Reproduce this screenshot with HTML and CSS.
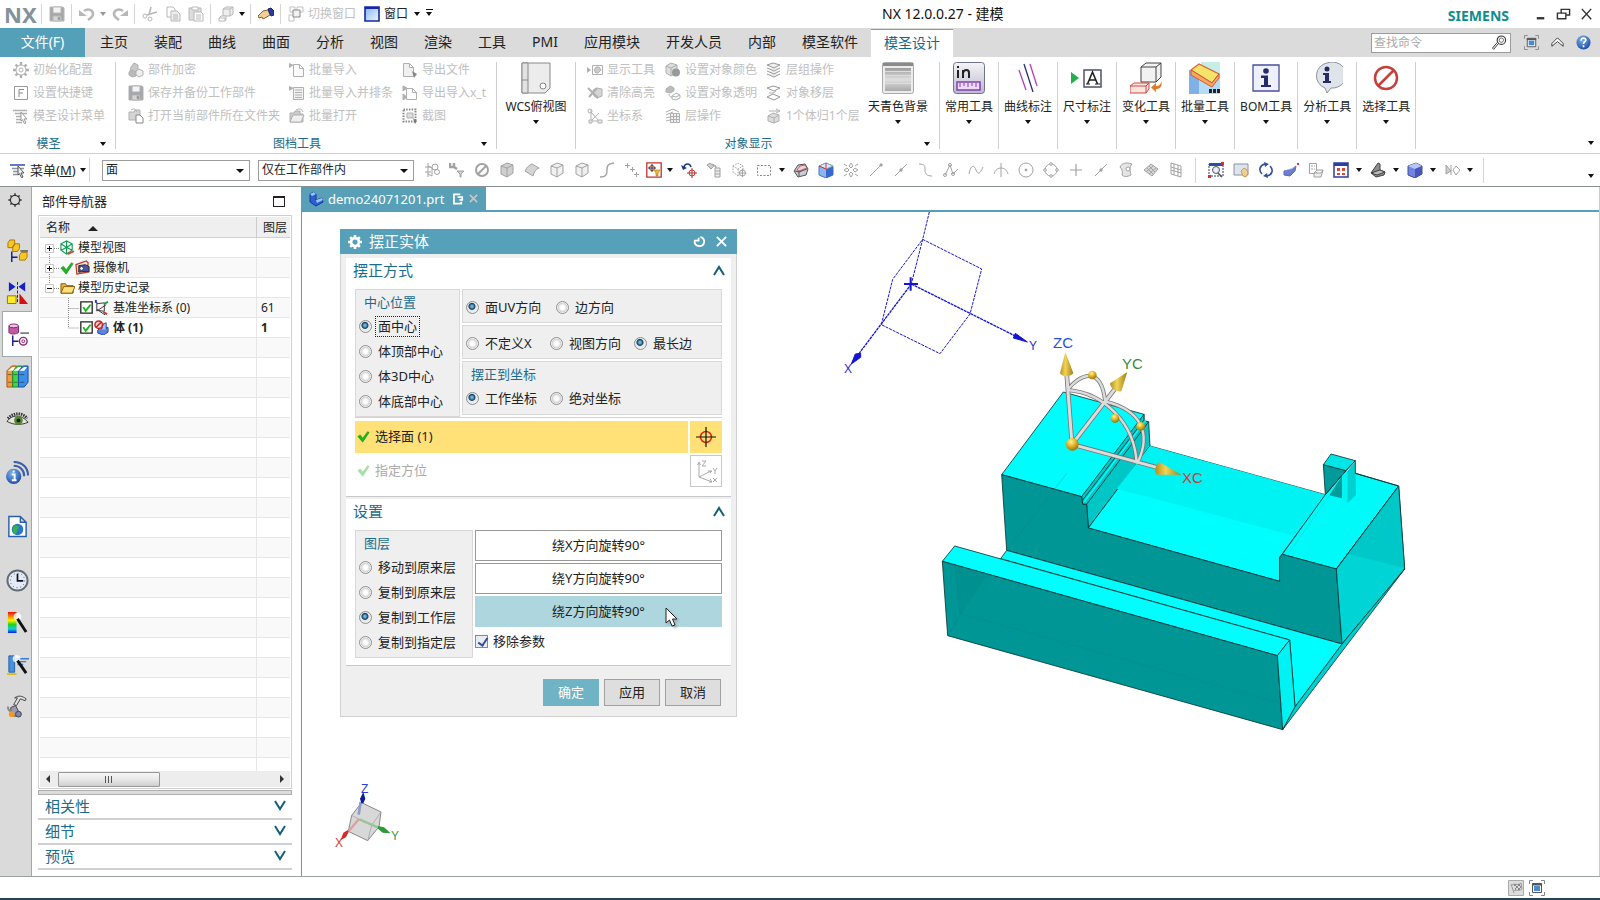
FILE: index.html
```html
<!DOCTYPE html>
<html lang="zh-CN">
<head>
<meta charset="utf-8">
<title>NX 12.0.0.27 - 建模</title>
<link rel="stylesheet" href="styles.css">
</head>
<body>
<svg class="sprite" width="0" height="0" aria-hidden="true">
  <defs>
    <linearGradient id="g-sky" x1="0" y1="0" x2="1" y2="1"><stop offset="0" stop-color="#7fb2f0"/><stop offset="1" stop-color="#f4f9ff"/></linearGradient>
    <linearGradient id="g-grey" x1="0" y1="0" x2="0" y2="1"><stop offset="0" stop-color="#9c9c9c"/><stop offset=".5" stop-color="#e0e0e0"/><stop offset="1" stop-color="#a8a8a8"/></linearGradient>
    <linearGradient id="g-metal" x1="0" y1="0" x2="0" y2="1"><stop offset="0" stop-color="#f4f4f8"/><stop offset="1" stop-color="#b9bccf"/></linearGradient>
    <linearGradient id="g-rain" x1="0" y1="0" x2="0" y2="1"><stop offset="0" stop-color="#e01010"/><stop offset=".25" stop-color="#ff9a00"/><stop offset=".4" stop-color="#f6f600"/><stop offset=".6" stop-color="#20d020"/><stop offset=".8" stop-color="#10d0e0"/><stop offset="1" stop-color="#1020d0"/></linearGradient>
    <linearGradient id="g-cone" x1="0" y1="0" x2="1" y2="0"><stop offset="0" stop-color="#b58f1c"/><stop offset=".4" stop-color="#f1d457"/><stop offset="1" stop-color="#a17d12"/></linearGradient>
    <radialGradient id="g-ball" cx=".4" cy=".3" r=".7"><stop offset="0" stop-color="#fff0a0"/><stop offset=".45" stop-color="#e6bd2e"/><stop offset="1" stop-color="#9c7406"/></radialGradient>
    <radialGradient id="g-blue" cx=".4" cy=".3" r=".8"><stop offset="0" stop-color="#7db4ee"/><stop offset="1" stop-color="#123f9c"/></radialGradient>
  </defs>
  <symbol id="save" viewBox="0 0 16 16"><path d="M1 1h13l1 1v13H1z" fill="#a4a6a8"/><path d="M4 1h8v6H4z" fill="#f3f3f3"/><path d="M4 10h8v5H4z" fill="#d6d6d6"/><path d="M9 11h2v3H9z" fill="#777"/></symbol>
  <symbol id="undo" viewBox="0 0 16 16"><path d="M5 5c4-3 9-1 9 3 0 2-2 4-5 6" stroke-width="2.600"/><path d="M0 4v6h8z" fill="currentColor" stroke="none"/></symbol>
  <symbol id="redo" viewBox="0 0 16 16"><path d="M11 5C7 2 2 4 2 8c0 2 2 4 5 6" stroke-width="2.600"/><path d="M16 4v6H8z" fill="currentColor" stroke="none"/></symbol>
  <symbol id="cut" viewBox="0 0 16 16"><path d="M9 1 7 9M15 6 5 9" stroke-width="1.6"/><circle cx="3" cy="10" r="2"/><circle cx="8" cy="13" r="2"/></symbol>
  <symbol id="copy" viewBox="0 0 16 16"><path d="M2 1h6l2 2v8H2z" fill="#fff"/><path d="M6 5h6l3 3v7H6z" fill="#eee"/><path d="M8 9h5M8 11h5M8 13h5"/></symbol>
  <symbol id="paste" viewBox="0 0 16 16"><path d="M1 2h12v12H1z" fill="#ddd"/><path d="M4 1h6v3H4z" fill="#fff"/><path d="M6 6h7l2 2v7H6z" fill="#fff"/><path d="M8 9h5M8 11h5M8 13h5"/></symbol>
  <symbol id="boxes" viewBox="0 0 16 16"><path d="m5 3 3-2h7v7l-3 2H5zM5 3h7v7M12 3l3-2" fill="#eee"/><path d="m1 12 2-2h5v4l-1 1H1zM1 12h6v3" fill="#fff"/></symbol>
  <symbol id="hand" viewBox="0 0 16 16"><path d="m0 10 5-5 5-1 2 5-5 3-2 1-1-2-3 1z" fill="#f0d098" stroke="#8a6030"/><path d="m10 3 3-1 3 3v4l-3 1z" fill="#2639a8" stroke="#1a2576"/></symbol>
  <symbol id="winswap" viewBox="0 0 16 16"><path d="M2 1h5v5H2zM9 1h6v5H9zM1 9h5v6H1z"/><path d="M5 4h7v7H5z" fill="#f2f2f2" stroke="#888"/></symbol>
  <symbol id="win" viewBox="0 0 16 16"><path d="M1 1h14v14H1z" fill="url(#g-sky)" stroke="#1527a5" stroke-width="1.6"/><path d="M1 2h14" stroke="#1527a5" stroke-width="2"/></symbol>
  <symbol id="gear" viewBox="0 0 16 16"><circle cx="8" cy="8" r="5"/><circle cx="8" cy="8" r="2"/><path d="M8 0v3M8 13v3M0 8h3M13 8h3M2.500 2.500l2 2M11.500 11.500l2 2M13.500 2.500l-2 2M4.500 11.500l-2 2" stroke-width="2.400"/></symbol>
  <symbol id="gearbold" viewBox="0 0 16 16"><circle cx="8" cy="8" r="4.500" stroke-width="3"/><path d="M8 0v3M8 13v3M0 8h3M13 8h3M2.500 2.500l2 2M11.500 11.500l2 2M13.500 2.500l-2 2M4.500 11.500l-2 2" stroke-width="3"/></symbol>
  <symbol id="key" viewBox="0 0 16 16"><path d="M1.500 1.500h13v13h-13z" stroke="#9a9a9a"/><path d="M6 12V4.500h5M6 8h4" stroke="#8a8a8a"/></symbol>
  <symbol id="menu" viewBox="0 0 16 16"><path d="M0 2.500h14M2 5.500h12M3 8.500h5M3 11.500h5M3 14.500h6" stroke-width="1.6"/><path d="m8 4 6 7-3 0 2 4-1.500.7-2-4L8 13z" fill="#fff" stroke="#999"/></symbol>
  <symbol id="menub" viewBox="0 0 16 16"><path d="M0 2h15v2H0z" fill="#6679c8" stroke="none"/><path d="M2 6.500h12M3 9.500h5M3 12.500h5" stroke="#8a93a8" stroke-width="1.500"/><path d="m8 4 6 7-3 0 2 4-1.500.7-2-4L8 13z" fill="#eee" stroke="#555"/></symbol>
  <symbol id="cubes" viewBox="0 0 16 16"><path d="m3 5 3-4 4 2v5l-5 3-3-2z" fill="#c8c8c8"/><path d="m1 10 3-2 4 2v4l-4 1-3-2z" fill="#b9b9b9"/><path d="m8 9 3-2 4 2v4l-4 2-3-2z" fill="#eee"/></symbol>
  <symbol id="doc" viewBox="0 0 16 16"><path d="M4.500 2.500h6l4 4v8h-10zM10.500 2.500v4h4" fill="#fafafa"/><path d="M0 1l5 2-5 3z" fill="currentColor" stroke="none"/></symbol>
  <symbol id="doclist" viewBox="0 0 16 16"><path d="M4.500 2.500h10v12h-10z" fill="#f2f2f2"/><path d="M6 5h7M6 7.500h7M6 10h7M6 12.500h7" /><path d="M0 1l5 2-5 3z" fill="currentColor" stroke="none"/></symbol>
  <symbol id="docout" viewBox="0 0 16 16"><path d="M1.500 1.500h6l4 4v9h-10zM7.500 1.500v4h4" fill="#f0f0f0"/><path d="M10 9l5 3-3 4z" fill="#888" stroke="none"/></symbol>
  <symbol id="docio" viewBox="0 0 16 16"><path d="M4.500 3.500h6l4 4v7h-10zM10.500 3.500v4h4" fill="#fff"/><path d="M1 1l4 2-4 3zM1 9l4 3-4 3z" fill="currentColor"/></symbol>
  <symbol id="folderdoc" viewBox="0 0 16 16"><path d="M1 4h5l1-2h5v10H1z" fill="#d4d4d4"/><path d="M8 7h4l3 3v5H8z" fill="#fff" stroke="#888"/><path d="M3 2c3-2 5-1 6 2"/></symbol>
  <symbol id="folder" viewBox="0 0 16 16"><path d="M1 14V5h4l1-2h5v3h3v8z" fill="#ccc"/><path d="m1 14 3-7h11l-3 7z" fill="#efefef"/><path d="M7 2c3-2 6-1 7 2"/></symbol>
  <symbol id="snap" viewBox="0 0 16 16"><path d="M1.500 1.500h12v12h-12z" stroke-width="2" stroke-dasharray="1.500 1.200" stroke="#888"/><path d="M5 5h6v5H5z" fill="#ddd"/><path d="m11 10 4 3-2 3z" fill="#777" stroke="none"/></symbol>
  <symbol id="show" viewBox="0 0 16 16"><path d="M0 5l4 3-4 3z" fill="currentColor" stroke="none"/><path d="M5.500 3.500h10v9h-10z"/><path d="m7 8 2-3h3l2 3-3 3H9z" fill="#ccc"/></symbol>
  <symbol id="clear" viewBox="0 0 16 16"><path d="m6 5 4-2 5 1v7l-5 2-3-2z" fill="#d4d4d4"/><path d="m1 3 10 10M10 3 2 12" stroke-width="2"/></symbol>
  <symbol id="csys" viewBox="0 0 16 16"><path d="M4 2v11h9M4 13l8-8M4 4l8 9"/><circle cx="3" cy="3" r="2"/><path d="M2 12h3v3H2zM11 12h4v3h-4z" fill="#eee"/></symbol>
  <symbol id="objcolor" viewBox="0 0 16 16"><path d="m1 4 5-3 6 2v8l-6 3-5-3zM1 4l5 2v8M6 6l6-3" fill="#ddd"/><circle cx="11" cy="10.500" r="4" fill="#999" stroke="none"/></symbol>
  <symbol id="objtrans" viewBox="0 0 16 16"><path d="m1 4 4-3 4 2v3L5 8 1 7z" fill="#bbb"/><path d="m7 11 4-3 4 2v3l-4 2-4-1zM7 11l4 1 4-2"/><path d="M4 9c0 2 1 3 3 3"/></symbol>
  <symbol id="layers" viewBox="0 0 16 16"><path d="m1 3 6-2 7 2-6 3zM1 6l7 3 6-3M1 9l7 3 6-3M1 12l7 3 6-3" fill="#eee" stroke="#999"/></symbol>
  <symbol id="layerset" viewBox="0 0 16 16"><path d="m1 4 7-3 6 3M1 7l7-3M1 10l4-1M1 13l4-1"/><path d="M5.500 5.500h9v9h-9zM5.500 8.500h9M5.500 11.500h9M8.500 5.500v9M11.500 5.500v9" fill="#f0f0f0"/></symbol>
  <symbol id="layermove" viewBox="0 0 16 16"><path d="m1 3 6-2 7 2-6 3zM1 12l6-3 7 3-6 3z" stroke="#999"/><path d="M3 8h4l3-2"/></symbol>
  <symbol id="onebody" viewBox="0 0 16 16"><path d="m2 8 5-3 6 2v6l-5 2-6-2zM2 8l6 2v5M8 10l5-3" fill="#ddd"/><path d="M3 3h9M10 1l4 2-4 2"/></symbol>
  <symbol id="cube" viewBox="0 0 16 16"><path d="m2 4 6-3 6 2v8l-6 4-6-3z" fill="#f0f0f0"/><path d="m2 4 6 2 6-3M8 6v9"/></symbol>
  <symbol id="cubedark" viewBox="0 0 16 16"><path d="m2 4 6-3 6 2v8l-6 4-6-3z" fill="#cfcfcf"/><path d="m2 4 6 2 6-3M8 6v9"/></symbol>
  <symbol id="sheet" viewBox="0 0 16 16"><path d="M1 9c2-4 4-6 7-7l7 4c-3 1-5 4-6 8z" fill="#d4d4d4"/></symbol>
  <symbol id="curve" viewBox="0 0 16 16"><path d="M1 15c6 0 7-2 7-7s1-6 7-7" stroke-width="1.400"/></symbol>
  <symbol id="filter1" viewBox="0 0 16 16"><path d="M4 1v14M4 4l4 2v8l-4-2M1 5h6M1 10h6"/><circle cx="11" cy="5" r="3"/><circle cx="13" cy="10" r="2.500"/></symbol>
  <symbol id="filter2" viewBox="0 0 16 16"><path d="M1 1v4h4V1M5 5l3 2" stroke-width="2.500"/><path d="M8 9h7l-3 3v3h-1v-3z" fill="#ccc"/></symbol>
  <symbol id="ban" viewBox="0 0 16 16"><circle cx="8" cy="8" r="6" stroke-width="2"/><path d="M12 4l-8 8" stroke-width="2"/></symbol>
  <symbol id="pluses" viewBox="0 0 16 16"><path d="M3.500 1v5M1 3.500h5M8.500 5v5M6 7.500h5M12.500 10v5M10 12.500h5"/></symbol>
  <symbol id="redsel" viewBox="0 0 16 16"><path d="M.8.800h14.400v14.400H.8z" stroke="#c23030" stroke-width="1.300"/><circle cx="6" cy="6" r="2.500" stroke="#933"/><path d="M6 2v8M2 6h8" stroke="#333"/><path d="M8 8h6l-2 3v3h-2v-3z" fill="#f2b53a" stroke="#a87410" stroke-width=".6"/></symbol>
  <symbol id="undotarget" viewBox="0 0 16 16"><path d="M3 5c1-4 6-4 7 0" stroke="#223a7a" stroke-width="1.600"/><path d="M0 3l2 5 4-2z" fill="#223a7a" stroke="none"/><circle cx="11" cy="11" r="3" stroke="#c33"/><path d="M11 6v10M6 11h10" stroke="#a33"/></symbol>
  <symbol id="chain" viewBox="0 0 16 16"><path d="m1 3 3-2 4 3-3 3zM6 2l4 2v3" fill="#ccc"/><path d="M9 6h5v9H9zM9 9h5M9 12h5" fill="#eee"/></symbol>
  <symbol id="cubetarget" viewBox="0 0 16 16"><path d="m2 4 5-3 5 3v6l-5 4-5-4zM2 4l5 3 5-3M7 7v7" stroke-dasharray="1.500 1.200"/><circle cx="11.500" cy="11" r="3" fill="#fff"/><path d="M11.500 7v8M7.500 11h8"/></symbol>
  <symbol id="marquee" viewBox="0 0 16 16"><path d="M1.500 3.500h13v10h-13z" stroke-dasharray="2 1.500" stroke="#888"/></symbol>
  <symbol id="shade" viewBox="0 0 16 16"><path d="m1 9 4-6 7-1 3 5-2 6-8 2z" fill="#c8ccd6" stroke="#555"/><path d="m4 8 3-4 5-1 2 3-8 3z" fill="#ecd2d4" stroke="#a33" stroke-width=".7"/><path d="M6 9v5M2 9l4 1 8-3" stroke="#555"/></symbol>
  <symbol id="bluecube" viewBox="0 0 16 16"><path d="m1 4 7-3 7 3v9l-7 3-7-3z" fill="#8ab6f2" stroke="#5573b8"/><path d="m8 7 7-3v9l-7 3z" fill="#3569cc" stroke="none"/><path d="m1 4 7 3 7-3-7-3z" fill="#d9eafc" stroke="#8aa"/><path d="M8 1v6l-7-3" stroke="#d33"/></symbol>
  <symbol id="dirs" viewBox="0 0 16 16"><path d="m8 1 2 3-2 2-2-2zM8 10l2 2-2 3-2-3zM1 8l3-2 2 2-2 2zM10 8l2-2 3 2-3 2zM1 2l3 2M1 14l3-2M15 2l-3 2M15 14l-3-2"/></symbol>
  <symbol id="line1" viewBox="0 0 16 16"><path d="M2 14 13 3"/><path d="M12 2h2v2h-2z" fill="currentColor"/></symbol>
  <symbol id="line2" viewBox="0 0 16 16"><path d="M2 14 14 2"/><circle cx="8" cy="8" r="1.200" fill="currentColor"/></symbol>
  <symbol id="arc1" viewBox="0 0 16 16"><path d="M1 2c6 0 6 2 6 6s2 6 7 6"/></symbol>
  <symbol id="poly" viewBox="0 0 16 16"><path d="M2 13 7 3l3 9 5-5"/><circle cx="2" cy="13" r="1.500"/><circle cx="7" cy="3" r="1.500"/><circle cx="10" cy="12" r="1.500"/></symbol>
  <symbol id="spline" viewBox="0 0 16 16"><path d="M1 12C3 2 6 3 8 8s4 4 7-3"/></symbol>
  <symbol id="tangent" viewBox="0 0 16 16"><path d="M1 12c2-8 12-8 14 0M8 1v14"/></symbol>
  <symbol id="circ" viewBox="0 0 16 16"><circle cx="8" cy="8" r="7"/><circle cx="8" cy="8" r="1" fill="currentColor"/></symbol>
  <symbol id="circ4" viewBox="0 0 16 16"><circle cx="8" cy="8" r="6"/><g fill="#fff"><circle cx="8" cy="2" r="1.300"/><circle cx="8" cy="14" r="1.300"/><circle cx="2" cy="8" r="1.300"/><circle cx="14" cy="8" r="1.300"/></g></symbol>
  <symbol id="plus" viewBox="0 0 16 16"><path d="M8 2v12M2 8h12" stroke-width="1.200"/></symbol>
  <symbol id="flag" viewBox="0 0 16 16"><path d="M2 5c2-4 6-5 12-3-3 3-2 7-1 11-4 2-7 2-9 0 1-3 0-6-2-8z" fill="#e4e4e4"/><circle cx="10" cy="7" r="2" fill="#fff"/></symbol>
  <symbol id="mesh" viewBox="0 0 16 16"><path d="m1 8 7-6 7 5-6 7z" fill="#d8d8d8"/><path d="m4 6 6 6M6 4l6 6M3 10l7-6M6 12l7-6"/></symbol>
  <symbol id="grid" viewBox="0 0 16 16"><path d="m3 1 10 3v11L3 12zM6 2v11M10 3v11M3 5l10 3M3 8l10 3"/></symbol>
  <symbol id="fit" viewBox="0 0 16 16"><path d="M1 2h14v12H1z" stroke="#2b3f8c" stroke-dasharray="2 1"/><path d="M1 2.500h14" stroke="#2d4aa8" stroke-width="3"/><circle cx="8" cy="8" r="3.500" fill="#e6eef8" stroke="#555"/><path d="m10 11 4 4" stroke="#555" stroke-width="1.600"/><path d="M0 13h3v3H0zM13 0h3v3h-3z" fill="#c33" stroke="none"/></symbol>
  <symbol id="pan" viewBox="0 0 16 16"><path d="M1 2h14v11H1z" fill="#dde4ec" stroke="#8892a0"/><path d="m8 9 3-3 3 2 1 3-2 4-3-1z" fill="#efcf8f" stroke="#c0a060"/></symbol>
  <symbol id="rotate" viewBox="0 0 16 16"><path d="M4 12C0 8 2 3 7 2M12 4c4 4 2 9-3 10" stroke="#34509c" stroke-width="1.600"/><path d="M6 0l5 2-4 3zM10 16l-5-2 4-3z" fill="#34509c" stroke="none"/></symbol>
  <symbol id="persp" viewBox="0 0 16 16"><path d="m1 9 8-2 4-3-1 5-5 5-6-1z" fill="#6d7fd0" stroke="#5a68b8"/><path d="m1 9 8-2 4-3-7 3z" fill="#c6cef2" stroke="none"/><path d="M14 1h2v2h-2z" fill="#d33" stroke="none"/></symbol>
  <symbol id="orient" viewBox="0 0 16 16"><path d="M1.500 1.500h7v10h-7zM3 4h2M6 4h1M3 7h2M6 7h1"/><path d="m6 11 3-3h6l-2 7H6zM6 11h7l2-3" fill="#eee"/></symbol>
  <symbol id="views" viewBox="0 0 16 16"><path d="M1 1h14v14H1z" fill="#fff" stroke="#2b3fa0" stroke-width="1.500"/><path d="M1 2.500h14" stroke="#2b3fa0" stroke-width="3"/><path d="M4 6h3v3H4zM9 6h3v3H9zM4 11h3v2H4zM9 11h3v2H9z" fill="#d64a3a" stroke="none"/></symbol>
  <symbol id="wedge" viewBox="0 0 16 16"><path d="M1 11 8 1l2 1v6l5 2-1 3-8 2z" fill="#8c8c8c" stroke="#444"/><path d="m1 11 9-3 5 2-8 3z" fill="#bbb" stroke="#444"/></symbol>
  <symbol id="shaded" viewBox="0 0 16 16"><path d="m1 4 8-3 6 3v8l-7 4-7-3z" fill="#7184e0" stroke="#3c4c9c"/><path d="m1 4 8-3 6 3-7 3z" fill="#b9c5f6" stroke="none"/><path d="m8 7 7-3v8l-7 4z" fill="#4658b4" stroke="none"/></symbol>
  <symbol id="section" viewBox="0 0 16 16"><path d="M2 3v9l5-3z" fill="#ccc"/><path d="m9 8 3-4 4 4-4 5zM7 3v10"/></symbol>
  <symbol id="lens" viewBox="0 0 16 16"><circle cx="10" cy="5.500" r="4.500" stroke="#333" stroke-width="1.200"/><circle cx="10" cy="5.500" r="2.300" stroke="#666"/><path d="m7 9-5 6M5.500 8l-5 6 1.500 1.500" stroke="#333"/></symbol>
  <symbol id="full" viewBox="0 0 16 16"><path d="M.5 4V.5H4M12 .5h3.500V4M15.500 12v3.500H12M4 15.500H.5V12" stroke="#888"/><path d="M3.500 3.500h9v9h-9z" fill="#fff" stroke="#555"/><path d="M3 4.500h10" stroke="#555" stroke-width="2"/><path d="M5 6h6v5H5z" fill="#4a8ad0" stroke="none"/></symbol>
  <symbol id="up2" viewBox="0 0 16 16"><path d="m2 9 6-6 6 6v3L8 7l-6 5z" fill="#fff" stroke="#333"/></symbol>
  <symbol id="help" viewBox="0 0 16 16"><circle cx="8" cy="8" r="7.500" fill="url(#g-blue)" stroke="none"/><path d="M5.500 6c0-4 5-3 5-.5C10.500 7 8 7 8 9.500M8 11v2" stroke="#fff" stroke-width="1.800"/></symbol>
  <symbol id="tick" viewBox="0 0 16 16"><path d="m1 8 3-2 3 4 6-8 2 1-8 12z" fill="#1db51d" stroke="#0c8c0c" stroke-width=".6"/></symbol>
  <symbol id="boxtick" viewBox="0 0 16 16"><path d="M1 1h14v14H1z" fill="#fff" stroke="#222" stroke-width="1.600"/><path d="m3 8 2-1 2 3 5-6 2 1-7 9z" fill="#1db51d" stroke="none"/></symbol>
  <symbol id="views3d" viewBox="0 0 16 16"><path d="m1 4 6-3 6 3v7l-6 4-6-4zM1 4l6 4 6-4M7 1v14M1 11l6-3 6 3" stroke="#159a55" stroke-width="1.200"/><path d="m8 15 7-3" stroke="#d43" stroke-width="2"/></symbol>
  <symbol id="camera" viewBox="0 0 16 16"><path d="m1 5 11-4 2 2-1 10-11 2z" fill="#fbe9e4" stroke="#c8301c" stroke-width="1.300"/><path d="m4 6 7-1 4 2v6l-3-1-8 1z" fill="#4b56a6" stroke="#222"/><circle cx="7" cy="9" r="2" fill="#fff" stroke="#333"/></symbol>
  <symbol id="yfolder" viewBox="0 0 16 16"><path d="M1 14V4h5l1 2h7v8z" fill="#e9b738" stroke="#8a5b0a"/><path d="m1 14 3-7h12l-3 7z" fill="#ffe07a" stroke="#8a5b0a"/></symbol>
  <symbol id="datum" viewBox="0 0 16 16"><path d="M3 2v10M3 4l8-1v9l-8-1M4 11l9-6M3 10l9 6" stroke="#333"/><path d="m11 4 4-2" stroke="#1a9a4a" stroke-width="2"/><path d="m10 13 4 2" stroke="#c33" stroke-width="2"/><path d="M2 0v3" stroke="#23b" stroke-width="2"/></symbol>
  <symbol id="solid" viewBox="0 0 16 16"><path d="m4 11 4-4 7 1v5l-5 3-6-2z" fill="#5d84dc" stroke="#2a459c"/><path d="m8 10 2-6 3-1v7" fill="#9fc0f4" stroke="#2a459c"/><circle cx="5" cy="5" r="4" fill="#f7d6d2" stroke="#c22" stroke-width="1.600"/><path d="m2 8 6-6" stroke="#c22" stroke-width="1.600"/></symbol>
  <symbol id="part" viewBox="0 0 16 16"><path d="m2 3 4-2 2 2v6l6-2 1 4-7 4-6-4z" fill="#2c5fd4" stroke="#123a94"/><path d="m2 3 4-2 2 2-4 2zM8 9l6-2 1 2-6 3z" fill="#9cc2fb" stroke="none"/></symbol>
</svg>

<header class="titlebar">
  <b class="nx">NX</b>
  <div class="quick">
    <span class="qsep"></span>
    <button class="qb" aria-label="保存"><svg class="ico"><use href="#save"/></svg></button>
    <span class="qsep"></span>
    <button class="qb" aria-label="撤销"><svg class="ico"><use href="#undo"/></svg></button><i class="arrow grey"></i>
    <button class="qb" aria-label="重做"><svg class="ico"><use href="#redo"/></svg></button>
    <span class="qsep"></span>
    <button class="qb" aria-label="剪切"><svg class="ico"><use href="#cut"/></svg></button>
    <button class="qb" aria-label="复制"><svg class="ico"><use href="#copy"/></svg></button>
    <button class="qb" aria-label="粘贴"><svg class="ico"><use href="#paste"/></svg></button>
    <span class="qsep"></span>
    <button class="qb" aria-label="重复命令"><svg class="ico"><use href="#boxes"/></svg></button><i class="arrow"></i>
    <span class="qsep"></span>
    <button class="qb" aria-label="触控"><svg class="ico"><use href="#hand"/></svg></button>
    <span class="qsep"></span>
    <button class="qt off"><svg class="ico"><use href="#winswap"/></svg>切换窗口</button>
    <button class="qt"><svg class="ico"><use href="#win"/></svg>窗口</button><i class="arrow"></i><i class="arrow barred"></i>
  </div>
  <h1>NX 12.0.0.27 - 建模</h1>
  <div class="winctl">
    <b class="siemens">SIEMENS</b>
    <button aria-label="最小化"><svg viewBox="0 0 16 16"><path d="M4 12h8" stroke-width="2.500"/></svg></button>
    <button aria-label="还原"><svg viewBox="0 0 16 16"><path d="M5.500 6V2.500h9v6H11M1.500 6.500h9v6h-9z" stroke-width="1.500"/></svg></button>
    <button aria-label="关闭"><svg viewBox="0 0 16 16"><path d="m3 2 10 11M13 2 3 13" stroke-width="1.500"/></svg></button>
  </div>
</header>

<nav class="tabs">
  <a class="file" href="#">文件(F)</a>
  <a href="#">主页</a><a href="#">装配</a><a href="#">曲线</a><a href="#">曲面</a><a href="#">分析</a><a href="#">视图</a><a href="#">渲染</a><a href="#">工具</a><a href="#">PMI</a><a href="#">应用模块</a><a href="#">开发人员</a><a href="#">内部</a><a href="#">模圣软件</a><a class="on" href="#">模圣设计</a>
  <div class="find">
    <label class="findbox"><input type="text" placeholder="查找命令" aria-label="查找命令"><svg class="ico"><use href="#lens"/></svg></label>
    <button aria-label="全屏"><svg class="ico"><use href="#full"/></svg></button>
    <button aria-label="最小化功能区"><svg class="ico"><use href="#up2"/></svg></button>
    <button aria-label="帮助"><svg class="ico"><use href="#help"/></svg></button>
  </div>
</nav>

<section class="ribbon">
  <div class="group g1">
    <div class="cmds">
      <button><svg class="ico"><use href="#gear"/></svg>初始化配置</button>
      <button><svg class="ico"><use href="#key"/></svg>设置快捷键</button>
      <button><svg class="ico"><use href="#menu"/></svg>模圣设计菜单</button>
    </div>
    <div class="gname"><span>模圣</span><i class="arrow"></i></div>
  </div>
  <div class="group g2">
    <div class="cmds">
      <button><svg class="ico"><use href="#cubes"/></svg>部件加密</button>
      <button><svg class="ico"><use href="#save"/></svg>保存并备份工作部件</button>
      <button><svg class="ico"><use href="#folderdoc"/></svg>打开当前部件所在文件夹</button>
      <button><svg class="ico"><use href="#doc"/></svg>批量导入</button>
      <button><svg class="ico"><use href="#doclist"/></svg>批量导入并排条</button>
      <button><svg class="ico"><use href="#folder"/></svg>批量打开</button>
      <button><svg class="ico"><use href="#docout"/></svg>导出文件</button>
      <button><svg class="ico"><use href="#docio"/></svg>导出导入x_t</button>
      <button><svg class="ico"><use href="#snap"/></svg>截图</button>
    </div>
    <div class="gname"><span>图档工具</span><i class="arrow"></i></div>
  </div>
  <div class="group wide">
    <button class="big"><svg viewBox="0 0 32 32"><path d="M2 1h28v25l-5 5H2z" fill="#ececec" stroke="#888"/><path d="M2 1h6v30H2zM2 18h6" fill="#e2e2e2" stroke="#888"/><circle cx="23" cy="24" r="3" fill="#fff" stroke="#888"/></svg>WCS俯视图<i class="arrow"></i></button>
  </div>
  <div class="group g4">
    <div class="row">
      <div class="cmds">
        <button><svg class="ico"><use href="#show"/></svg>显示工具</button>
        <button><svg class="ico"><use href="#clear"/></svg>清除高亮</button>
        <button><svg class="ico"><use href="#csys"/></svg>坐标系</button>
        <button><svg class="ico"><use href="#objcolor"/></svg>设置对象颜色</button>
        <button><svg class="ico"><use href="#objtrans"/></svg>设置对象透明</button>
        <button><svg class="ico"><use href="#layerset"/></svg>层操作</button>
        <button><svg class="ico"><use href="#layers"/></svg>层组操作</button>
        <button><svg class="ico"><use href="#layermove"/></svg>对象移层</button>
        <button><svg class="ico"><use href="#onebody"/></svg>1个体归1个层</button>
      </div>
      <button class="big"><svg viewBox="0 0 32 32"><rect x=".5" y=".5" width="31" height="31" rx="2" fill="#ececec" stroke="#aaa"/><path d="M1 1h30v3H1z" fill="#8a8a8a"/><path d="M3 6h26v23H3z" fill="url(#g-grey)"/><path d="M3 9.500h26M3 13.500h26M3 17.500h26M3 21.500h26" stroke="#ddd"/></svg>天青色背景<i class="arrow"></i></button>
    </div>
    <div class="gname"><span>对象显示</span><i class="arrow"></i></div>
  </div>
  <div class="group"><button class="big"><svg viewBox="0 0 32 32"><rect x=".5" y=".5" width="31" height="31" rx="3" fill="url(#g-metal)" stroke="#70738c"/><path d="M5 8v8M5 4v2M10 16V8M10 11c1-4 6-4 6 0v5" fill="none" stroke="#222" stroke-width="2"/><path d="M4 20h23v8H4z" fill="#eadcf6" stroke="#8a3cb4" stroke-width="1.500"/><path d="M7 21v4M11 21v3M15 21v4M19 21v3M23 21v4" stroke="#8a3cb4"/></svg>常用工具<i class="arrow"></i></button></div>
  <div class="group"><button class="big"><svg viewBox="0 0 32 32" fill="none"><path d="m7 8 7 20M18 2l7 22" stroke="#b13fb8" stroke-width="1.300"/><path d="m12 2 9 28" stroke="#2e2e6c" stroke-width="1.300"/></svg>曲线标注<i class="arrow"></i></button></div>
  <div class="group"><button class="big"><svg viewBox="0 0 32 32"><path d="m0 10 8 6-8 6z" fill="#22b14c"/><path d="M13 8h17v17H13z" fill="#fff" stroke="#50506c" stroke-width="1.500"/><path d="m16.500 22 5-12 5 12M18 18h7" fill="none" stroke="#222" stroke-width="1.600"/><path d="M15 22h4M24 22h5" stroke="#222"/></svg>尺寸标注<i class="arrow"></i></button></div>
  <div class="group"><button class="big"><svg viewBox="0 0 32 32"><path d="m11 5 5-4h15v14l-5 5H11zM11 5h15v15M26 5l5-4" fill="#f2f2f2" stroke="#444"/><path d="m0 24 4-3h15v6l-3 4H0zM0 24h16v7M16 24l3-3" fill="#fde6e2" stroke="#d0453c"/><path d="M31 19c0 4-2 5-5 5v-3l-5 4.500 5 4.500v-3c4 0 7-3 5-8z" fill="#e07a2a"/></svg>变化工具<i class="arrow"></i></button></div>
  <div class="group"><button class="big"><svg viewBox="0 0 32 32"><path d="M0 8h31v24H0z" fill="#b4dcf6"/><path d="M12 0h19v12H12z" fill="#c6eee6"/><path d="m0 8 10 5v19H0z" fill="#7fb0e6"/><path d="m2 8 8-6 20 10-7 9z" fill="#f6e36a" stroke="#e06030" stroke-width="1.200"/><path d="m2 8 21 13 7-9v4l-7 9L2 13z" fill="#f7a860" stroke="#d8583a"/><path d="M20 27h3v4h-3zM24 27h3v4h-3zM28 27h3v4h-3z" fill="#222"/></svg>批量工具<i class="arrow"></i></button></div>
  <div class="group"><button class="big"><svg viewBox="0 0 32 32"><path d="M3 3h26v26H3z" fill="#eef1fb" stroke="#4a4f9c" stroke-width="1.300"/><circle cx="16" cy="9" r="2.800" fill="#262a6a"/><path d="M11 13.500h7V23h3v2H11v-2h3v-7h-3z" fill="#262a6a"/></svg>BOM工具<i class="arrow"></i></button></div>
  <div class="group"><button class="big"><svg viewBox="0 0 32 32"><path d="M16 1a14 13 0 1 1 4 25l-4 5-2-5A13 13 0 0 1 16 1z" fill="#dfe4ea" stroke="#8d939c"/><circle cx="16" cy="7" r="2.500" fill="#262a6a"/><path d="M12 11h6v8h2v2h-8v-2h2v-6h-2z" fill="#262a6a"/></svg>分析工具<i class="arrow"></i></button></div>
  <div class="group"><button class="big"><svg viewBox="0 0 32 32" fill="none" stroke="#c4403c" stroke-width="2.500"><circle cx="16" cy="16" r="11"/><path d="M24 8 8 24"/></svg>选择工具<i class="arrow"></i></button></div>
  <i class="arrow corner"></i>
</section>

<section class="selbar">
  <button class="menubtn"><svg class="ico"><use href="#menub"/></svg>菜单(<u>M</u>)<i class="arrow"></i></button>
  <span class="drop d1"><select aria-label="类型过滤器"><option>面</option></select></span>
  <span class="drop d2"><select aria-label="选择范围"><option>仅在工作部件内</option></select></span>
  <div class="tools">
    <button aria-label="过滤 1"><svg class="ico"><use href="#filter1"/></svg></button>
    <button aria-label="过滤 2"><svg class="ico"><use href="#filter2"/></svg></button>
    <button aria-label="禁止"><svg class="ico"><use href="#ban"/></svg></button>
    <button aria-label="实体"><svg class="ico"><use href="#cubedark"/></svg></button>
    <button aria-label="片体"><svg class="ico"><use href="#sheet"/></svg></button>
    <button aria-label="面"><svg class="ico"><use href="#cube"/></svg></button>
    <button aria-label="边"><svg class="ico"><use href="#cube"/></svg></button>
    <button aria-label="曲线"><svg class="ico"><use href="#curve"/></svg></button>
    <button aria-label="点"><svg class="ico"><use href="#pluses"/></svg></button>
    <button class="tight" aria-label="选择意图"><svg class="ico"><use href="#redsel"/></svg></button><i class="arrow"></i>
    <button aria-label="重设选择"><svg class="ico"><use href="#undotarget"/></svg></button>
    <button aria-label="链"><svg class="ico"><use href="#chain"/></svg></button>
    <button aria-label="体选择"><svg class="ico"><use href="#cubetarget"/></svg></button>
    <button aria-label="矩形选择"><svg class="ico"><use href="#marquee"/></svg></button><i class="arrow"></i>
    <button aria-label="着色"><svg class="ico"><use href="#shade"/></svg></button>
    <button aria-label="高亮"><svg class="ico"><use href="#bluecube"/></svg></button>
    <button aria-label="方位"><svg class="ico"><use href="#dirs"/></svg></button>
    <button aria-label="端点"><svg class="ico"><use href="#line1"/></svg></button>
    <button aria-label="中点"><svg class="ico"><use href="#line2"/></svg></button>
    <button aria-label="控制点"><svg class="ico"><use href="#arc1"/></svg></button>
    <button aria-label="极点"><svg class="ico"><use href="#poly"/></svg></button>
    <button aria-label="样条"><svg class="ico"><use href="#spline"/></svg></button>
    <button aria-label="交点"><svg class="ico"><use href="#tangent"/></svg></button>
    <button aria-label="圆心"><svg class="ico"><use href="#circ"/></svg></button>
    <button aria-label="象限点"><svg class="ico"><use href="#circ4"/></svg></button>
    <button aria-label="现有点"><svg class="ico"><use href="#plus"/></svg></button>
    <button aria-label="线上点"><svg class="ico"><use href="#line2"/></svg></button>
    <button aria-label="面上点"><svg class="ico"><use href="#flag"/></svg></button>
    <button aria-label="小平面"><svg class="ico"><use href="#mesh"/></svg></button>
    <button aria-label="栅格点"><svg class="ico"><use href="#grid"/></svg></button>
    <span class="tsep"></span>
    <button aria-label="适合窗口"><svg class="ico"><use href="#fit"/></svg></button>
    <button aria-label="平移"><svg class="ico"><use href="#pan"/></svg></button>
    <button aria-label="旋转"><svg class="ico"><use href="#rotate"/></svg></button>
    <button aria-label="透视"><svg class="ico"><use href="#persp"/></svg></button>
    <button aria-label="定向"><svg class="ico"><use href="#orient"/></svg></button>
    <button aria-label="视图布局"><svg class="ico"><use href="#views"/></svg></button><i class="arrow"></i>
    <button aria-label="渲染样式"><svg class="ico"><use href="#wedge"/></svg></button><i class="arrow"></i>
    <button aria-label="带边着色"><svg class="ico"><use href="#shaded"/></svg></button><i class="arrow"></i>
    <button aria-label="剖切"><svg class="ico"><use href="#section"/></svg></button><i class="arrow"></i>
    <span class="tsep"></span>
  </div>
  <i class="arrow corner"></i>
</section>

<main>
  <nav class="rail">
    <button class="first" aria-label="选项"><svg viewBox="0 0 24 24" fill="none" stroke="#333"><circle cx="12" cy="12" r="5.500" stroke-width="1.500"/><path d="M12 4v3M12 17v3M4 12h3M17 12h3M6.500 6.500l2 2M15.500 15.500l2 2M17.500 6.500l-2 2M8.500 15.500l-2 2" stroke-width="1.800"/></svg></button>
    <button aria-label="装配导航器"><svg viewBox="0 0 24 24"><path d="m2 4 2-3h5v5l-2 3H2zM7 8l2-3h5v5l-2 3H7zM14 17l2-3h6v5l-2 3h-6z" fill="#f8c820" stroke="#a87808"/><path d="M15 12.500h8" stroke="#111"/><path d="M6 13v11M6 19h6" stroke="#1a1a8c" stroke-width="1.500"/></svg></button>
    <button aria-label="约束导航器"><svg viewBox="0 0 24 24"><path d="m3 1 7 5-7 5zM20 1l-7 5 7 5z" fill="#1522c8"/><path d="M1.500 15.500h9v8h-9z" fill="#ffe92a" stroke="#8a7a00"/><path d="M14 13v11h9z" fill="#d41212"/><path d="M12 1v22" stroke="#222" stroke-dasharray="3 1.500"/></svg></button>
    <button class="on" aria-label="部件导航器"><svg viewBox="0 0 24 24"><path d="M2 3v7c1 2 8 2 10 0V3" fill="#c257a4" stroke="#7c2a66"/><ellipse cx="7" cy="3" rx="5" ry="2" fill="#f0c0e0" stroke="#7c2a66"/><path d="M14 10.500h9" stroke="#111"/><path d="M6 13v11M6 19h6" stroke="#1a1a8c" stroke-width="1.500"/><circle cx="17" cy="19" r="4" fill="#fff" stroke="#8c2a6c" stroke-width="1.500"/><circle cx="17" cy="19" r="1.500" fill="none" stroke="#8c2a6c"/></svg></button>
    <button aria-label="重用库"><svg viewBox="0 0 24 24"><path d="m1 6 5-5h5L7 6v17H1z" fill="#f59a3c" stroke="#a85410"/><path d="m7 6 5-5h5l-4 5v17H7z" fill="#3cd84c" stroke="#16862a"/><path d="m13 6 5-5h5v17l-4 5h-6z" fill="#3a8ee8" stroke="#154f9c"/><path d="m2 6 5-4h3L7 6zM8 6l5-4h3l-3 4zM14 6l5-4h3l-3 4z" fill="#fff"/><path d="M2 10h4M8 10h4M14 10h5M2 18h4M8 18h4M14 18h5" stroke="#2228" /></svg></button>
    <button aria-label="视图管理"><svg viewBox="0 0 24 24"><path d="M1 15c5-7 15-8 22 1-7 3-15 3-22-1z" fill="#e4e4e4" stroke="#333"/><circle cx="13" cy="14" r="4.500" fill="#5a8a28"/><circle cx="13" cy="14" r="2" fill="#122"/><path d="M2 12C7 6 17 5 22 12" fill="none" stroke="#333" stroke-width="3" stroke-dasharray="1.500 1"/></svg></button>
    <button class="gap" aria-label="HD3D 工具"><svg viewBox="0 0 24 24"><circle cx="8" cy="16" r="8" fill="url(#g-blue)"/><path d="M6 14h3v6M6 20h5M8 10v2" stroke="#fff" stroke-width="2" fill="none"/><path d="M8 5c6 0 11 4 11 11M8 1c9 0 15 6 15 14" fill="none" stroke="#3a5fae" stroke-width="2.200"/></svg></button>
    <button class="gap" aria-label="浏览器"><svg viewBox="0 0 24 24"><path d="M3 1.500h12l6 6v15H3zM15 1.500v6h6" fill="#fff" stroke="#2a5fa8" stroke-width="1.500"/><circle cx="12" cy="15" r="6" fill="#2a78c8"/><path d="M8 12c4-3 7 1 4 3 0 3-2 4-3 5-2-2-3-5-1-8z" fill="#36b24a"/></svg></button>
    <button class="gap" aria-label="历史记录"><svg viewBox="0 0 24 24"><circle cx="12" cy="12" r="10.500" fill="#e3ecf6" stroke="#636a72" stroke-width="2"/><circle cx="12" cy="12" r="7.500" fill="none" stroke="#456" stroke-dasharray="1 2.900"/><path d="M12 5v7.500h6" fill="none" stroke="#112" stroke-width="1.800"/></svg></button>
    <button aria-label="系统可视化"><svg viewBox="0 0 24 24"><path d="M2 1h9v22H2z" fill="url(#g-rain)"/><circle cx="12" cy="6" r="4" fill="#fff" opacity=".8"/><path d="m12 8 9 14" stroke="#111" stroke-width="3"/></svg></button>
    <button aria-label="分析助手"><svg viewBox="0 0 24 24"><path d="M3 3h6v17H3z" fill="#4a90dc" stroke="#1f5ea8"/><path d="M10 6h14M11 9h10M12 12h6" stroke="#3a7cc8" stroke-width="1.500"/><path d="M1 22h10" stroke="#d8c020" stroke-width="2"/><circle cx="11" cy="6" r="4" fill="#fff" opacity=".8"/><path d="m12 8 9 13" stroke="#111" stroke-width="3"/></svg></button>
    <button aria-label="角色"><svg viewBox="0 0 24 24"><path d="M9 3c4-3 8-2 12 1l-1 2-5-2-4 7-3-1 4-7z" fill="#e0e0e0" stroke="#444"/><path d="m5 13 5-2 4 8-3 3H5z" fill="#9898b8" stroke="#444"/><path d="M2 12c0 3 1 5 4 5" fill="none" stroke="#888" stroke-width="2"/><circle cx="6" cy="20" r="3" fill="#f29a20"/><circle cx="13" cy="20" r="3" fill="#7c88b4" stroke="#444"/></svg></button>
  </nav>

  <aside class="navigator">
    <header><h2>部件导航器</h2><button aria-label="浮动"><span></span></button></header>
    <div class="treebox">
      <table class="tree">
        <colgroup><col><col class="clayer"></colgroup>
        <thead><tr><th>名称<i class="sort"></i></th><th>图层</th></tr></thead>
        <tbody>
          <tr><td><div class="node"><svg class="t1" viewBox="0 0 20 20"><path d="M9.500 14v6M14 10.500h5" class="dots"/><path d="M5.500 6.500h8v8h-8z" class="exp"/><path d="M7 10.500h5M9.500 8v5" class="pm"/></svg><svg class="ico"><use href="#views3d"/></svg>模型视图</div></td><td></td></tr>
          <tr><td><div class="node"><svg class="t1" viewBox="0 0 20 20"><path d="M9.500 0v20M14 10.500h5" class="dots"/><path d="M5.500 6.500h8v8h-8z" class="exp"/><path d="M7 10.500h5M9.500 8v5" class="pm"/></svg><svg class="ico mark"><use href="#tick"/></svg><svg class="ico"><use href="#camera"/></svg>摄像机</div></td><td></td></tr>
          <tr><td><div class="node"><svg class="t1" viewBox="0 0 20 20"><path d="M9.500 0v6M14 10.500h5" class="dots"/><path d="M5.500 6.500h8v8h-8z" class="exp"/><path d="M7 10.500h5" class="pm"/></svg><svg class="ico"><use href="#yfolder"/></svg>模型历史记录</div></td><td></td></tr>
          <tr><td><div class="node"><svg class="t2" viewBox="0 0 40 20"><path d="M28.500 0v20M28.500 10.500H39" class="dots"/></svg><svg class="ico box"><use href="#boxtick"/></svg><svg class="ico"><use href="#datum"/></svg>基准坐标系 (0)</div></td><td>61</td></tr>
          <tr class="strong"><td><div class="node"><svg class="t2" viewBox="0 0 40 20"><path d="M28.500 0v10H39" class="dots"/></svg><svg class="ico box"><use href="#boxtick"/></svg><svg class="ico"><use href="#solid"/></svg>体 (1)</div></td><td>1</td></tr>
        </tbody>
      </table>
      <div class="blank"></div>
      <div class="hscroll"><i class="la"></i><div class="thumb"><span></span></div><i class="ra"></i></div>
    </div>
    <div class="splitter"></div>
    <button class="fold">相关性<svg viewBox="0 0 12 12"><path d="m1 1 5 8 5-8"/></svg></button>
    <button class="fold">细节<svg viewBox="0 0 12 12"><path d="m1 1 5 8 5-8"/></svg></button>
    <button class="fold">预览<svg viewBox="0 0 12 12"><path d="m1 1 5 8 5-8"/></svg></button>
  </aside>

  <section class="view">
    <div class="doctabs"><div class="doctab"><svg class="ico"><use href="#part"/></svg>demo24071201.prt<svg class="mod" viewBox="0 0 12 12"><path d="M8 1H1v10h8V9M5 4h5v3H7" /></svg><button aria-label="关闭标签"><svg viewBox="0 0 10 10"><path d="m1 1 8 8M9 1 1 9"/></svg></button></div></div>
    <div class="canvas">
      <svg class="scene" viewBox="303 212 1296 664">
        <!-- absolute datum -->
        <g transform="translate(820 200) scale(.333333)" fill="none" stroke="#1414d2" stroke-width="3">
          <path d="M328 36 308 118 274 252 M308 118 485 207 450 342 360 461 184 374 218 238 308 118" stroke-dasharray="9 3"/>
          <path d="M274 252 600 415M274 252 110 470" stroke-width="4" stroke-dasharray="9 2"/>
          <path d="M252 252h42M272 232v40" stroke-width="6"/>
          <path d="m586 400 36 26-42-12zM106 462l-12 30 28-20V460z" fill="#1414d2"/>
        </g>
        <g class="lbl" fill="#2a2ad0"><text x="844" y="373">X</text><text x="1029" y="350">Y</text></g>
        <!-- solid body -->
        <g transform="translate(920 370) scale(.333333)" stroke="#0c3434" stroke-width="2.500" stroke-linejoin="round">
          <path d="M245 314 430 66l242 67v17L485 380z" fill="#00fcfc"/>
          <path d="M485 380 672 133l0 20 14 2 4 73-185 246-5-71-12 0z" fill="#00c6c6"/>
          <path d="M488 390 672 150M500 403 686 155" fill="none"/>
          <path d="m492 396 186-246" stroke="#00ffff" stroke-width="4"/>
          <path d="m690 228 526 146-137 188v72L505 474z" fill="#00fefe"/>
          <path d="m690 228 526 146-92 124L590 356z" fill="#00f3f3" stroke="none"/>
          <path d="m1079 562 8-9 129-179 62-72 28 6 130 40-187 249-162-44z" fill="#00fafa" stroke="none"/>
          <path d="M1079 562l8-9 162 44 187-249-130-38" fill="none"/>
          <path d="m1210 284 68 18-62 72z" fill="#009a9a"/>
          <path d="m1210 284 23-32 73 20-28 30z" fill="#00e6e6"/>
          <path d="m1282 303 24-29 2 101-26 25z" fill="#00d0d0" stroke="none"/>
          <path d="m1266 312 16-9v97l-16-4z" fill="#00f4f4" stroke="none"/>
          <path d="m1266 318v67l-38-9z" fill="#009c9c" stroke="none"/>
          <path d="m1087 553 129-179 62-72 28-30v38M1306 310l130 38" fill="none"/>
          <path d="m1110 545 118-168" stroke="#00dede" stroke-width="2"/>
          <path d="m245 314 240 66 3 23h12l5 71 574 160v-72l8-9 162 44 17 225L260 541z" fill="#009696"/>
          <path d="m1249 597 187-249 18 249-188 225z" fill="#00d4d4"/>
          <path d="m1286 552 150-204 18 246z" fill="#00c8c8" stroke="none"/>
          <path d="m1266 822 188-225-366 482 37-69z" fill="#00d0d0"/>
          <path d="m1249 597 187-249 18 249" fill="none"/>
          <path d="m260 541 1006 281-141 188-16-200L242 566z" fill="#00fefe"/>
          <path d="m67 574 37-46 1005 282-37 47z" fill="#00fefe"/>
          <path d="m67 574 1005 283 16 222L83 797z" fill="#009696"/>
          <path d="m1072 857 37-47 16 200-37 69z" fill="#00f2f2"/>
          <g fill="none" stroke="#0a7c7c" stroke-width="2" opacity=".4"><path d="m104 580 16 150 968 272M83 797l37-60M260 541l180-230"/></g>
          <path d="m83 797 37-60-15-152 110 30-20 10z" fill="#008888" stroke="none" opacity=".35"/>
        </g>
        <!-- dynamic handle -->
        <g transform="translate(820 200) scale(.333333)" fill="none">
          <g stroke="#777" stroke-width="14"><path d="M756 733 740 520M756 733 890 560M756 733l265 72"/><path d="M744 568c30-40 100-80 112 40M744 570c110 10 200 100 206 220M858 605c100 25 140 90 94 185" stroke-width="12"/></g>
          <g stroke="#dcdcdc" stroke-width="9"><path d="M756 733 740 520M756 733 890 560M756 733l265 72"/><path d="M744 568c30-40 100-80 112 40M744 570c110 10 200 100 206 220M858 605c100 25 140 90 94 185" stroke-width="7"/></g>
          <path d="M736 456 720 520c8 12 30 12 40 0z" fill="url(#g-cone)"/>
          <path d="m922 516-52 34c0 14 20 28 34 24z" fill="url(#g-cone)"/>
          <path d="m1084 824-66-38c-12 8-16 28-8 38z" fill="url(#g-cone)"/>
          <g fill="url(#g-ball)"><circle cx="757" cy="733" r="19"/><circle cx="817" cy="525" r="13"/><circle cx="885" cy="655" r="13"/><circle cx="962" cy="679" r="13"/></g>
        </g>
        <g class="axis"><text x="1053" y="348" fill="#2a50d8">ZC</text><text x="1122" y="369" fill="#3a8a3a">YC</text><text x="1182" y="483" fill="#c83c3c">XC</text></g>
        <!-- view triad -->
        <g transform="translate(300 760) scale(.333333)">
          <path d="m185 128 58 28-6 44-34 42-58-28 10-48z" fill="#d8d8d8" stroke="#888" stroke-width="3"/>
          <path d="m155 166 60 30 28-40M215 196l-12 46" fill="none" stroke="#9a9a9a" stroke-width="2"/>
          <path d="M176 164l6-38" stroke="#8c9ccc" stroke-width="8"/><path d="m178 178 56 24" stroke="#9cc49c" stroke-width="7"/><path d="m176 178-30 36" stroke="#dca0a0" stroke-width="7"/>
          <path d="m190 96-10 20 4 14h6l6-14z" fill="#0a1f94"/><path d="m272 220-20-18-18-4v8l14 12z" fill="#2a9a3a"/><path d="m122 240 8-22 14-8 2 6-8 16z" fill="#d42a2a"/>
        </g>
        <g class="lbl"><text x="361" y="793" fill="#2a3fd0">Z</text><text x="391" y="840" fill="#3a9a4a">Y</text><text x="335" y="847" fill="#d43a3a">X</text></g>
      </svg>

      <form class="dialog">
        <header><svg class="ico"><use href="#gearbold"/></svg><h2>摆正实体</h2><button type="button" aria-label="重置"><svg viewBox="0 0 14 14"><path d="M8 2c6 2 5 10-1 10-4 0-6-3-5-6M1 6h5V3" /></svg></button><button type="button" aria-label="关闭"><svg viewBox="0 0 14 14"><path d="m2 2 10 10M12 2 2 12"/></svg></button></header>
        <div class="dbody">
          <section>
            <h3>摆正方式<svg viewBox="0 0 12 12"><path d="m1 10 5-8 5 8"/></svg></h3>
            <div class="cols c1">
              <fieldset class="stack"><b>中心位置</b>
                <label><input type="radio" name="pos" checked><span class="focus">面中心</span></label>
                <label><input type="radio" name="pos"><span>体顶部中心</span></label>
                <label><input type="radio" name="pos"><span>体3D中心</span></label>
                <label><input type="radio" name="pos"><span>体底部中心</span></label>
              </fieldset>
              <div class="right">
                <fieldset class="line uv"><label><input type="radio" name="dir" checked><span>面UV方向</span></label><label><input type="radio" name="dir"><span>边方向</span></label></fieldset>
                <fieldset class="line"><label><input type="radio" name="x"><span>不定义X</span></label><label><input type="radio" name="x"><span>视图方向</span></label><label><input type="radio" name="x" checked><span>最长边</span></label></fieldset>
                <fieldset class="line titled"><b>摆正到坐标</b><label><input type="radio" name="cs" checked><span>工作坐标</span></label><label><input type="radio" name="cs"><span>绝对坐标</span></label></fieldset>
              </div>
            </div>
            <div class="pick active"><div><svg class="ico"><use href="#tick"/></svg>选择面 (1)</div><button type="button" aria-label="选择面"><svg viewBox="0 0 20 20"><circle cx="10" cy="10" r="5.500" fill="none" stroke="#e02810" stroke-width="1.500"/><path d="M10 0v20M0 10h20" stroke="#111" stroke-width="1.200"/></svg></button></div>
            <div class="pick idle"><div><svg class="ico"><use href="#tick"/></svg>指定方位</div><button type="button" aria-label="指定方位"><svg viewBox="0 0 24 24" fill="none" stroke="#aaa"><path d="M5 18V4M5 18l12-6M5 18l13 5M3.500 6 5 3l1.500 3M14 12h4l-2 2M15 23h3l-2-3M8 2h4L8 7h4M19 9l2 3 2-3M21 12v3M19 19l4 4M23 19l-4 4"/></svg></button></div>
          </section>
          <section>
            <h3>设置<svg viewBox="0 0 12 12"><path d="m1 10 5-8 5 8"/></svg></h3>
            <div class="cols c2">
              <fieldset class="stack"><b>图层</b>
                <label><input type="radio" name="ly"><span>移动到原来层</span></label>
                <label><input type="radio" name="ly"><span>复制到原来层</span></label>
                <label><input type="radio" name="ly" checked><span>复制到工作层</span></label>
                <label><input type="radio" name="ly"><span>复制到指定层</span></label>
              </fieldset>
              <div class="right">
                <button type="button" class="rot">绕X方向旋转90°</button>
                <button type="button" class="rot">绕Y方向旋转90°</button>
                <button type="button" class="rot hot">绕Z方向旋转90°</button>
                <label class="chk"><input type="checkbox" checked><span>移除参数</span></label>
              </div>
            </div>
          </section>
          <footer><button type="button" class="ok">确定</button><button type="button">应用</button><button type="button">取消</button></footer>
        </div>
        <svg class="cursor" viewBox="0 0 14 20"><path d="M1 1v15l3.500-3 2.500 6 3-1-2.500-6H12z" fill="#fff" stroke="#222"/></svg>
      </form>
    </div>
  </section>
</main>

<footer class="status">
  <svg class="ico"><path d="M.5.500h15v15H.5z" fill="#dcdcdc" stroke="#aaa"/><path d="M3 4l3 9M4 5c3-2 5 1 9-2l1 6c-4 3-6 0-8 2" stroke="#999"/><path d="M6 4h2v2H6zM10 4h2v2h-2zM8 6h2v2H8zM12 6h1v2h-1zM7 8h1v2H7zM10 8h2v2h-2z" fill="#888" stroke="none"/></svg>
  <svg class="ico"><use href="#full"/></svg>
</footer>
</body>
</html>
```
FILE: styles.css
```css
* { box-sizing: border-box; }
html, body { height: 100%; margin: 0; }
body {
  display: flex; flex-direction: column; overflow: hidden; background: #fff; color: #222;
  font: 12px/16px "Noto Sans", "Noto Sans CJK SC", sans-serif;
}
button { border: 0; padding: 0; background: none; font: inherit; color: inherit; }
h1, h2, h3 { margin: 0; font-weight: 400; }
a { color: inherit; text-decoration: none; }
svg { display: block; flex: none; }
.sprite { position: absolute; }
.ico { width: 16px; height: 16px; fill: none; stroke: currentColor; }
.arrow { display: block; flex: none; border: 3px solid transparent; border-top: 4px solid #111; border-bottom: 0; }
.arrow.grey { border-top-color: #999; }
.arrow.barred { position: relative; margin: 0; }
.arrow.barred::before { content: ""; position: absolute; left: -3px; top: -7px; width: 7px; height: 1px; background: #111; }

/* title bar */
.titlebar { display: grid; grid-template-columns: auto 1fr auto; align-items: center; height: 28px; position: relative; }
.nx { padding-left: 4px; width: 42px; font: 700 22px/28px "Noto Sans", sans-serif; color: #83929c; }
.quick { display: flex; align-items: center; gap: 8px; color: #b4b4b4; }
.quick .arrow { margin: 0 -2px; }
.quick .barred { margin: 0; }
.qb .ico { color: #b8b8b8; }
.qb { width: 15px; }
.qsep { width: 1px; height: 20px; margin: 0 -1px; background: #d6d6d6; }
.qt { display: flex; align-items: center; gap: 4px; color: #222; }
.qt.off { color: #c2c2c2; }
.titlebar h1 { position: absolute; left: 50%; top: 0; margin-left: 82px; font-size: 14px; line-height: 28px; color: #111; }
.winctl { display: flex; align-items: center; gap: 8px; padding-right: 6px; }
.winctl button svg { width: 15px; height: 15px; fill: none; stroke: #333; }
.siemens { margin-right: 16px; padding-top: 3px; font-size: 14px; color: #0c8e8e; }

/* tabs */
.tabs { display: flex; height: 29px; background: #dbdbdb; font-size: 14px; line-height: 28px; }
.tabs a { padding: 0 13px; }
.tabs .file { width: 85px; margin-right: 2px; padding: 0; text-align: center; color: #fff; background: #54a0b9; }
.tabs .on { margin-top: 1px; border-top: 1px solid #8a9a9e; line-height: 25px; background: #fff; color: #14688a; }
.find { display: flex; align-items: center; gap: 11px; margin-left: auto; padding-right: 9px; }
.find .ico { width: 15px; height: 15px; }
.findbox { display: flex; align-items: center; width: 140px; height: 20px; margin-right: 2px; padding-right: 3px; border: 1px solid #9c9c9c; background: #fff; }
.findbox input { flex: 1; min-width: 0; padding: 0 0 0 2px; border: 0; outline: 0; background: none; font: 12px/16px "Noto Sans", "Noto Sans CJK SC", sans-serif; }
.findbox input::placeholder { color: #aaa; }

/* ribbon */
.ribbon { position: relative; display: flex; height: 97px; padding: 5px 0 4px; border-bottom: 1px solid #d0d0d0; }
.group { display: flex; flex-direction: column; padding: 0 5px; border-right: 1px solid #d0d0d0; }
.cmds { display: grid; grid-auto-flow: column; grid-template-rows: repeat(3, 16px); row-gap: 7px; color: #c0c0c0; }
.cmds button { display: flex; align-items: center; gap: 4px; white-space: nowrap; }
.cmds .ico { color: #b0b0b0; }
.g1 { width: 116px; padding: 0 0 0 13px; }
.g1 .gname { margin-left: -13px; }
.g2 { width: 381px; padding: 0 0 0 12px; }
.g2 .cmds { grid-template-columns: 161px 113px 1fr; }
.g2 .gname { margin-left: -12px; }
.wide { width: 79px; padding: 0; }
.g4 { width: 364px; padding: 0 5px 0 11px; }
.g4 .cmds { grid-template-columns: 78px 101px 96px; }
.g4 .big { width: 72px; }
.g4 .gname { margin: auto -5px 0 -11px; }
.row { display: flex; }
.gname { display: flex; align-items: center; margin-top: auto; line-height: 10px; color: #1a6c8c; }
.gname span { flex: 1; text-align: center; }
.gname .arrow { margin: 0 9px 0 3px; }
.big { display: flex; flex-direction: column; align-items: center; white-space: nowrap; }
.big svg { width: 32px; height: 32px; margin-bottom: 5px; }
.big .arrow { margin-top: 5px; }
.corner { position: absolute; right: 6px; bottom: 8px; }

/* selection bar */
.selbar { position: relative; display: flex; align-items: center; height: 33px; border-bottom: 1px solid #87908f; }
.menubtn { display: flex; align-items: center; width: 90px; height: 24px; padding-left: 10px; border-right: 1px solid #d4d4d4; font-size: 13px; }
.menubtn .ico { margin-right: 4px; }
.menubtn .arrow { margin-left: 4px; }
.drop { position: relative; display: block; margin-left: 8px; }
.drop::after { content: ""; position: absolute; right: 6px; top: 9px; border: 4px solid transparent; border-top: 4px solid #111; border-bottom: 0; pointer-events: none; }
.d1 { width: 148px; margin-left: 12px; }
.d2 { width: 156px; margin-right: 5px; }
.drop select { display: block; width: 100%; height: 21px; padding: 0 3px; appearance: none; border: 1px solid #9c9c9c; border-radius: 0; background: #fff; font: inherit; color: #222; }
.tools { display: flex; align-items: center; color: #a2a2a2; }
.tools button { display: flex; justify-content: center; width: 25px; }
.tools .tight { width: 20px; }
.tools .arrow { margin: 0 3px; }
.tsep { width: 1px; height: 25px; margin: 0 7px; background: #d4d4d4; }

/* main area */
main { flex: 1; display: flex; min-height: 0; }
.rail { display: flex; flex-direction: column; width: 32px; border-right: 1px solid #a2a8a8; background: #dadada; }
.rail button { display: flex; align-items: center; height: 42px; padding-left: 6px; flex: none; }
.rail svg { width: 23px; height: 23px; }
.rail .first { height: 26px; margin-bottom: 16px; padding-left: 5px; }
.rail .first svg { width: 20px; height: 20px; }
.rail .on { height: 46px; margin: -2px -1px -2px 2px; padding-left: 4px; border: 1px solid #a2a8a8; border-right: 0; background: #fff; }
.rail .gap { margin-top: 12px; }

.navigator { display: flex; flex-direction: column; width: 270px; padding: 0 9px 6px 6px; border-right: 1px solid #87908f; }
.navigator header { display: flex; align-items: center; justify-content: space-between; height: 28px; padding: 0 7px 0 4px; }
.navigator h2 { font-size: 13px; }
.navigator header span { display: block; width: 12px; height: 11px; border: 1px solid #222; border-top-width: 2px; }
.treebox { flex: 1; display: flex; flex-direction: column; min-height: 0; padding: 1px; border: 1px solid #d0d0d0; }
.tree { width: 100%; table-layout: fixed; border-collapse: separate; border-spacing: 0; }
.clayer { width: 34px; }
.tree th { height: 21px; padding: 2px 6px 0; border-bottom: 1px solid #d0d0d0; background: #efefef; font-weight: 400; text-align: left; white-space: nowrap; }
.tree th + th { border-left: 1px solid #ccc; }
.sort { display: inline-block; margin: 0 0 1px 18px; border: 5px solid transparent; border-bottom: 5px solid #222; border-top: 0; }
.tree td { height: 20px; padding: 0; border-bottom: 1px solid #e6e6e6; }
.tree td + td { padding-left: 4px; border-left: 1px solid #e6e6e6; }
.tree tbody tr:nth-child(even) { background: #f9f9f9; }
.node { display: flex; align-items: center; height: 19px; white-space: nowrap; }
.node .ico { width: 15px; height: 15px; margin-right: 3px; }
.node .ico.box { width: 13px; height: 13px; margin-right: 1px; }
.node .ico.mark { width: 14px; height: 14px; margin-right: 1px; }
.node .ico.box + .ico { margin-right: 4px; }
.t1 { width: 20px; height: 20px; }
.t2 { width: 40px; height: 20px; }
.dots, .exp, .pm { fill: none; stroke: #888; }
.dots { stroke-dasharray: 1 1; }
.exp { fill: #fff; stroke: #c4c4c4; }
.pm { stroke: #111; }
.strong { font-weight: 700; }
.blank {
  flex: 1;
  background:
    linear-gradient(#e6e6e6, #e6e6e6) calc(100% - 33px) 0 / 1px 100% no-repeat,
    repeating-linear-gradient(#f9f9f9 0 19px, #e6e6e6 19px 20px, #fff 20px 39px, #e6e6e6 39px 40px);
}
.hscroll { display: flex; align-items: center; height: 16px; padding: 0 6px; background: #ededed; }
.la, .ra { border: 4px solid transparent; border-left: 0; border-right: 4px solid #333; }
.ra { margin-left: auto; border-right: 0; border-left: 4px solid #333; }
.thumb { display: flex; align-items: center; justify-content: center; width: 102px; height: 15px; margin-left: 8px; border: 1px solid #979797; border-radius: 1px; background: linear-gradient(#f6f6f6, #e8e8e8 50%, #cfcfcf); }
.thumb span { width: 8px; height: 7px; background: repeating-linear-gradient(90deg, #555 0 1px, transparent 1px 3px); }
.splitter { height: 5px; margin-top: 1px; border: 1px solid #b0b0b0; background: #dcdcdc; }
.fold { display: flex; align-items: center; justify-content: space-between; height: 25px; padding: 0 6px 1px 7px; border-bottom: 2px solid #d0d0d0; font-size: 15px; color: #1a6c8c; }
.fold svg, .dialog h3 svg { width: 12px; height: 12px; fill: none; stroke: #14607c; stroke-width: 2; }

.view { flex: 1; min-width: 0; display: flex; flex-direction: column; border-right: 1px solid #ccc; }
.doctabs { display: flex; height: 25px; border-bottom: 2px solid #57a0b7; }
.doctab { display: flex; align-items: center; height: 25px; width: 184px; padding: 0 8px 2px 6px; background: #57a0b7; color: #fff; font-size: 13px; }
.doctab .ico { margin-right: 4px; }
.doctab .mod { width: 11px; height: 12px; margin-left: auto; fill: none; stroke: #fff; stroke-width: 2; }
.doctab button { margin-left: 5px; }
.doctab button svg { width: 9px; height: 9px; stroke: #c4c4c4; stroke-width: 2; }
.canvas { flex: 1; position: relative; overflow: hidden; margin-left: 1px; }
.scene { position: absolute; left: 0; top: 0; width: 1296px; height: 664px; font-family: "Liberation Sans", sans-serif; }
.lbl { font-size: 12px; }
.axis { font-size: 15px; }

/* dialog */
.dialog { position: absolute; left: 37px; top: 17px; width: 397px; font-size: 13px; line-height: 19px; }
.dialog > header { display: flex; align-items: center; height: 25px; padding: 0 9px 0 8px; background: #57a0b9; color: #fff; }
.dialog h2 { flex: 1; margin-left: 7px; font-size: 15px; }
.dialog > header .ico { width: 14px; height: 14px; }
.dialog > header button svg { width: 13px; height: 13px; margin-left: 9px; fill: none; stroke: #fff; stroke-width: 2; }
.dbody { padding: 4px 5px 10px; border: 1px solid #d2d2d2; border-top: 0; background: #efefef; }
.dbody > section { padding: 0 9px 7px; border-bottom: 1px solid #c8c8c8; background: #fff; }
.dbody > section + section { margin-top: 2px; }
.dialog h3 { display: flex; align-items: center; justify-content: space-between; height: 31px; margin: 0 -3px 0 -2px; padding-bottom: 6px; font-size: 15px; color: #1a6c8c; }
.cols { display: grid; gap: 2px; }
.c1 { grid-template-columns: 105px 1fr; margin-bottom: 3px; border-bottom: 1px solid #d4d4d4; }
.c2 { grid-template-columns: 118px 1fr; }
.right { display: flex; flex-direction: column; gap: 2px; }
fieldset { margin: 0; min-width: 0; padding: 0 0 0 3px; border: 1px solid #d8d8d8; background: #efefef; }
fieldset b { display: block; height: 24px; padding-left: 5px; font-weight: 400; line-height: 24px; color: #1a6c8c; }
fieldset label, .chk { display: flex; align-items: center; height: 25px; }
fieldset span { margin-left: 4px; padding: 0 2px; white-space: nowrap; }
.focus { outline: 1px dotted #222; }
.stack { height: 128px; }
.line { display: grid; grid-template-columns: repeat(3, 84px); height: 34px; }
.line label { height: 34px; }
.uv { grid-template-columns: 90px 84px; }
.titled { height: 54px; }
.titled label { height: 25px; }
.titled b { grid-column: 1 / -1; }
input[type=radio] { appearance: none; width: 13px; height: 13px; margin: 0; flex: none; border: 1px solid #8f8f8f; border-radius: 50%; background: radial-gradient(#fff 25%, #cfcfcf 60%, #f4f4f4 66%); }
input[type=radio]:checked { background: radial-gradient(circle at 45% 40%, #6ab4dc 0 1px, #123f60 3px, #123f60 3px, #e8e8e8 4px, #f6f6f6); }
.pick { display: grid; grid-template-columns: 1fr 32px; gap: 2px; height: 32px; margin-bottom: 2px; }
.pick > div { display: flex; align-items: center; gap: 5px; padding: 0 0 1px 2px; }
.pick .ico { width: 13px; height: 13px; }
.pick button { display: flex; align-items: center; justify-content: center; }
.pick button svg { width: 20px; height: 20px; }
.active > div, .active button { background: #ffe178; }
.idle > div { color: #aaa; }
.idle .ico { opacity: .4; }
.idle button { border: 1px solid #c8c8c8; }
.idle button svg { width: 24px; height: 24px; }
.rot { height: 31px; border: 1px solid #999; background: #fff; }
.hot { border-color: #add6de; background: #add6de; }
.chk { gap: 5px; }
input[type=checkbox] { appearance: none; width: 13px; height: 13px; margin: 0; border: 1px solid #858b92; background: #e9edf3; }
input[type=checkbox]:checked::after { content: ""; display: block; width: 4px; height: 8px; margin: 0 0 0 4px; border: solid #3a4a98; border-width: 0 2px 2px 0; transform: rotate(35deg); }
.dialog footer { display: flex; justify-content: flex-end; gap: 5px; padding: 13px 10px 0 0; }
.dialog footer button { width: 56px; height: 27px; border: 1px solid #a0a0a0; background: #dedede; }
.dialog footer .ok { border-color: #70b3c5; background: #70b3c5; color: #fff; }
.cursor { position: absolute; left: 325px; top: 378px; width: 14px; height: 20px; filter: drop-shadow(2px 2px 1px #8888); }

.status { display: flex; align-items: center; justify-content: flex-end; gap: 5px; height: 24px; padding-right: 55px; border-top: 1px solid #9ba1a1; border-bottom: 2px solid #234457; }
```
